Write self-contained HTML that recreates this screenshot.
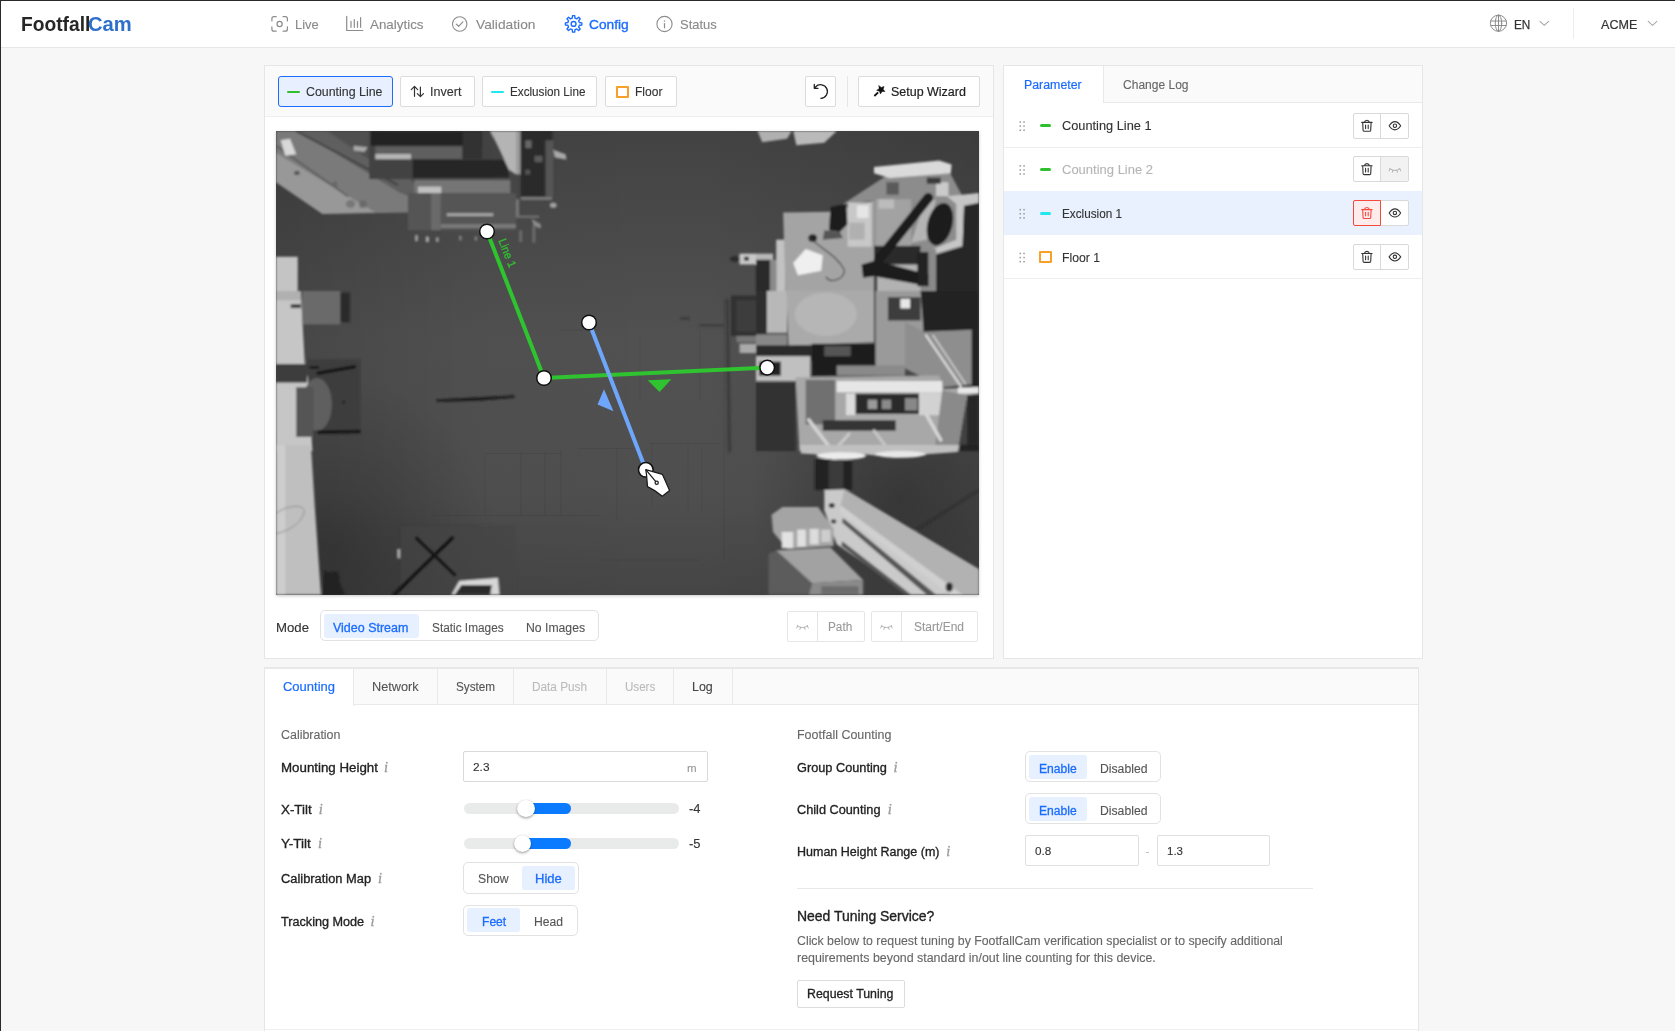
<!DOCTYPE html><html><head><meta charset="utf-8"><title>FootfallCam Config</title><style>
*{box-sizing:border-box}
html,body{margin:0;padding:0}
body{width:1675px;height:1031px;overflow:hidden;background:#f7f7f7;font-family:"Liberation Sans",sans-serif;position:relative}
.b{position:absolute}
.t{position:absolute;white-space:pre}
svg{position:absolute;overflow:visible}
.btn{background:#fff;border:1px solid #dcdcdc;border-radius:2px}
.seg{background:#fff;border:1px solid #e2e2e2;border-radius:5px}
.sel{background:#e6f0fe;border-radius:3px}
</style></head><body><div id="root" style="position:absolute;left:0;top:0;width:1675px;height:1031px;will-change:transform"><div class="b" style="left:0px;top:0px;width:1675px;height:48px;background:#fff;border-bottom:1px solid #e6e6e6"></div>
<span class="t" style="left:20.72px;top:15.00px;font-size:19.5px;line-height:19.5px;color:#262626;font-weight:700;transform:scaleX(0.9851);transform-origin:0 50%;">Footfall</span>
<span class="t" style="left:88.42px;top:15.00px;font-size:19.5px;line-height:19.5px;color:#2f6fcc;font-weight:700;transform:scaleX(1.0349);transform-origin:0 50%;">Cam</span>
<svg style="left:0;top:0" width="1675" height="1031" viewBox="0 0 1675 1031" fill="none" stroke-linecap="round" stroke-linejoin="round" ><path d="M271.9,21.0V18.7Q271.9,16.7 273.9,16.7H276.2M283.09999999999997,16.7H285.4Q287.4,16.7 287.4,18.7V21.0M287.4,26.9V29.2Q287.4,31.2 285.4,31.2H283.09999999999997M276.2,31.2H273.9Q271.9,31.2 271.9,29.2V26.9" stroke="#8c8c8c" stroke-width="1.2"/><circle cx="279.6" cy="24" r="2.6" stroke="#8c8c8c" stroke-width="1.2"/></svg>
<span class="t" style="left:295.19px;top:18.00px;font-size:13.5px;line-height:13.5px;color:#8a8a8a;transform:scaleX(0.9589);transform-origin:0 50%;-webkit-text-stroke:0.12px #8a8a8a;">Live</span>
<svg style="left:0;top:0" width="1675" height="1031" viewBox="0 0 1675 1031" fill="none" stroke-linecap="round" stroke-linejoin="round" ><path d="M346.7,16.3V30.5H362.8 M351,21.3V27.3 M354.3,19.6V27.3 M357.5,21.6V27.3 M360.6,17.6V27.3" stroke="#8c8c8c" stroke-width="1.2"/></svg>
<span class="t" style="left:370.39px;top:18.00px;font-size:13.5px;line-height:13.5px;color:#8a8a8a;transform:scaleX(0.9910);transform-origin:0 50%;-webkit-text-stroke:0.12px #8a8a8a;">Analytics</span>
<svg style="left:0;top:0" width="1675" height="1031" viewBox="0 0 1675 1031" fill="none" stroke-linecap="round" stroke-linejoin="round" ><circle cx="459.7" cy="24" r="7.2" stroke="#8c8c8c" stroke-width="1.1"/><path d="M456.3,24.1L458.6,26.3L462.9,21.9" stroke="#8c8c8c" stroke-width="1.2"/></svg>
<span class="t" style="left:475.59px;top:18.00px;font-size:13.5px;line-height:13.5px;color:#8a8a8a;transform:scaleX(1.0197);transform-origin:0 50%;-webkit-text-stroke:0.12px #8a8a8a;">Validation</span>
<svg style="left:0;top:0" width="1675" height="1031" viewBox="0 0 1675 1031" fill="none" stroke-linecap="round" stroke-linejoin="round" ><path d="M572.22,18.16L572.52,15.67L574.68,15.67L574.98,18.16L576.68,18.87L578.65,17.32L580.18,18.85L578.63,20.82L579.34,22.52L581.83,22.82L581.83,24.98L579.34,25.28L578.63,26.98L580.18,28.95L578.65,30.48L576.68,28.93L574.98,29.64L574.68,32.13L572.52,32.13L572.22,29.64L570.52,28.93L568.55,30.48L567.02,28.95L568.57,26.98L567.86,25.28L565.37,24.98L565.37,22.82L567.86,22.52L568.57,20.82L567.02,18.85L568.55,17.32L570.52,18.87Z" stroke="#1b6cff" stroke-width="1.4"/><circle cx="573.6" cy="23.9" r="2.4" stroke="#1b6cff" stroke-width="1.4"/></svg>
<span class="t" style="left:589.19px;top:18.00px;font-size:13.5px;line-height:13.5px;color:#1b6cff;transform:scaleX(1.0158);transform-origin:0 50%;-webkit-text-stroke:0.35px #1b6cff;">Config</span>
<svg style="left:0;top:0" width="1675" height="1031" viewBox="0 0 1675 1031" fill="none" stroke-linecap="round" stroke-linejoin="round" ><circle cx="664.5" cy="24" r="7.6" stroke="#8c8c8c" stroke-width="1.1"/><path d="M664.5,23.5V27.8" stroke="#8c8c8c" stroke-width="1.2"/><circle cx="664.5" cy="20.9" r="0.75" fill="#8c8c8c"/></svg>
<span class="t" style="left:680.19px;top:18.00px;font-size:13.5px;line-height:13.5px;color:#8a8a8a;transform:scaleX(0.9599);transform-origin:0 50%;-webkit-text-stroke:0.12px #8a8a8a;">Status</span>
<svg style="left:0;top:0" width="1675" height="1031" viewBox="0 0 1675 1031" fill="none" stroke-linecap="round" stroke-linejoin="round" ><g stroke="#8c8c8c" stroke-width="1"><circle cx="1498.5" cy="23.2" r="8.1"/><ellipse cx="1498.5" cy="23.2" rx="3.2" ry="8.1"/><path d="M1498.5,15.1V31.3 M1490.8,21H1506.2 M1490.8,25.5H1506.2"/></g></svg>
<span class="t" style="left:1514.41px;top:18.00px;font-size:13.2px;line-height:13.2px;color:#333;transform:scaleX(0.8905);transform-origin:0 50%;-webkit-text-stroke:0.25px #333;">EN</span>
<svg style="left:0;top:0" width="1675" height="1031" viewBox="0 0 1675 1031" fill="none" stroke-linecap="round" stroke-linejoin="round" ><path d="M1540.0,21.4L1544.3,25.3L1548.6,21.4" stroke="#a8a8a8" stroke-width="1.1"/></svg>
<div class="b" style="left:1573px;top:8px;width:1px;height:31px;background:#ececec"></div>
<span class="t" style="left:1600.91px;top:18.00px;font-size:13.2px;line-height:13.2px;color:#333;transform:scaleX(0.9531);transform-origin:0 50%;-webkit-text-stroke:0.2px #333;">ACME</span>
<svg style="left:0;top:0" width="1675" height="1031" viewBox="0 0 1675 1031" fill="none" stroke-linecap="round" stroke-linejoin="round" ><path d="M1648.2,21.4L1652.5,25.3L1656.8,21.4" stroke="#a8a8a8" stroke-width="1.1"/></svg>
<div class="b" style="left:264px;top:65px;width:730px;height:594px;background:#fff;border:1px solid #e6e6e6"></div>
<div class="b" style="left:265px;top:66px;width:728px;height:51px;background:#fafafa;border-bottom:1px solid #efefef"></div>
<div class="b" style="left:278px;top:76px;width:115px;height:31px;background:#e8effe;border:1.5px solid #1b6cff;border-radius:3px"></div>
<div class="b" style="left:287px;top:90.5px;width:13px;height:2.0px;background:#2fc02f;border-radius:1px"></div>
<span class="t" style="left:305.64px;top:86.00px;font-size:12.5px;line-height:12.5px;color:#333;transform:scaleX(0.9910);transform-origin:0 50%;-webkit-text-stroke:0.12px #333;">Counting Line</span>
<div class="b btn" style="left:400px;top:76px;width:75px;height:31px;"></div>
<svg style="left:0;top:0" width="1675" height="1031" viewBox="0 0 1675 1031" fill="none" stroke-linecap="round" stroke-linejoin="round" ><path d="M414.5,86.5V96.3 M411.3,89.6L414.5,86.4L417.7,89.6 M420.4,87V96.5 M417.3,93.6L420.4,96.7L423.5,93.6" stroke="#333" stroke-width="1.2"/></svg>
<span class="t" style="left:429.64px;top:86.00px;font-size:12.5px;line-height:12.5px;color:#333;transform:scaleX(1.0031);transform-origin:0 50%;-webkit-text-stroke:0.12px #333;">Invert</span>
<div class="b btn" style="left:482px;top:76px;width:115px;height:31px;"></div>
<div class="b" style="left:491px;top:90.5px;width:13px;height:2.0px;background:#22e6f0;border-radius:1px"></div>
<span class="t" style="left:510.04px;top:86.00px;font-size:12.5px;line-height:12.5px;color:#333;transform:scaleX(0.9362);transform-origin:0 50%;-webkit-text-stroke:0.12px #333;">Exclusion Line</span>
<div class="b btn" style="left:605px;top:76px;width:72px;height:31px;"></div>
<div class="b" style="left:616px;top:85.5px;width:13px;height:12.5px;border:2px solid #f9a02b;border-radius:1px"></div>
<span class="t" style="left:634.74px;top:86.00px;font-size:12.5px;line-height:12.5px;color:#333;transform:scaleX(0.9641);transform-origin:0 50%;-webkit-text-stroke:0.12px #333;">Floor</span>
<div class="b btn" style="left:805px;top:76px;width:31px;height:31px;"></div>
<svg style="left:0;top:0" width="1675" height="1031" viewBox="0 0 1675 1031" fill="none" stroke-linecap="round" stroke-linejoin="round" ><path d="M815.55,86.95A6.8,6.8 0 1 1 820.84,98.30 M814.3,84.4V88.3H818" stroke="#222" stroke-width="1.3"/></svg>
<div class="b" style="left:847px;top:76px;width:1px;height:31px;background:#e6e6e6"></div>
<div class="b btn" style="left:858px;top:76px;width:122px;height:31px;"></div>
<svg style="left:0;top:0" width="1675" height="1031" viewBox="0 0 1675 1031" fill="none" stroke-linecap="round" stroke-linejoin="round" ><path d="M878.93,85.72L881.31,87.42L884.06,86.43L883.17,89.22L884.95,91.53L882.03,91.54L880.39,93.96L879.47,91.18L876.67,90.36L879.02,88.64Z" fill="#111" stroke="#111" stroke-width="0.5"/><path d="M874.4,96L878.1,92.4" stroke="#111" stroke-width="1.8" stroke-linecap="butt"/></svg>
<span class="t" style="left:891.14px;top:86.00px;font-size:12.5px;line-height:12.5px;color:#222;transform:scaleX(0.9978);transform-origin:0 50%;-webkit-text-stroke:0.2px #222;">Setup Wizard</span>
<svg style="left:276px;top:131px;overflow:hidden;box-shadow:0 1px 3px rgba(0,0,0,.22)" width="703" height="464" viewBox="276 131 703 464"><defs>
<linearGradient id="fl" x1="0" y1="0" x2="0" y2="1"><stop offset="0" stop-color="#434343"/><stop offset=".45" stop-color="#515151"/><stop offset=".78" stop-color="#4f4f4f"/><stop offset="1" stop-color="#454545"/></linearGradient>
<linearGradient id="fh" x1="0" y1="0" x2="1" y2="0"><stop offset="0" stop-color="#000" stop-opacity=".13"/><stop offset=".28" stop-color="#000" stop-opacity=".02"/><stop offset=".6" stop-color="#000" stop-opacity="0"/><stop offset="1" stop-color="#000" stop-opacity=".1"/></linearGradient>
<radialGradient id="d1" cx="330" cy="545" r="170" gradientUnits="userSpaceOnUse"><stop offset="0" stop-color="#000" stop-opacity=".22"/><stop offset="1" stop-color="#000" stop-opacity="0"/></radialGradient>
<radialGradient id="d2" cx="900" cy="500" r="150" gradientUnits="userSpaceOnUse"><stop offset="0" stop-color="#000" stop-opacity=".25"/><stop offset="1" stop-color="#000" stop-opacity="0"/></radialGradient>
<filter id="bl" x="-5%" y="-5%" width="110%" height="110%"><feGaussianBlur stdDeviation="0.9"/></filter>
</defs><rect x="276" y="131" width="703" height="464" fill="url(#fl)"/><rect x="276" y="131" width="703" height="464" fill="url(#fh)"/><rect x="276" y="131" width="703" height="464" fill="url(#d1)"/><rect x="276" y="131" width="703" height="464" fill="url(#d2)"/><g stroke="#303030" stroke-opacity=".2" stroke-width="1" fill="none"><path d="M485,454V515 M521,452V515 M545,451V515 M561,450V515 M617,448V520 M652,443V508 M688,445V510 M702,448V512 M485,453.5H561 M430,515.5H600 M578,448.5H640 M650,443.5H720 M400,525.5H480 M724,300V560 M560,330H600 M640,335V400 M600,560H700 M700,330V400"/></g><g filter="url(#bl)"><g transform="translate(276,131) scale(0.155239)"><polygon points="0,0 600,0 1000,470 870,525 300,535 0,330" fill="#7a7a7a" /><polygon points="150,0 620,0 1000,470 800,400" fill="#5e5e5e" /><polygon points="330,0 620,0 880,300 760,290" fill="#505050" /><polygon points="0,140 0,330 300,535 640,525" fill="#989898" /><line x1="130" y1="0" x2="780" y2="345" stroke="#454545" stroke-width="14" stroke-linecap="round" /><line x1="0" y1="95" x2="460" y2="420" stroke="#5a5a5a" stroke-width="10" stroke-linecap="round" /><polygon points="30,60 90,50 130,150 60,160" fill="#d8d8d8" /><polygon points="500,95 590,105 570,135 500,125" fill="#a8a8a8" /><ellipse cx="135" cy="270" rx="18" ry="14" fill="#555" /><ellipse cx="380" cy="345" rx="16" ry="20" fill="#666" /><ellipse cx="480" cy="470" rx="30" ry="25" fill="#777" /><ellipse cx="560" cy="470" rx="25" ry="25" fill="#6a6a6a" /><rect x="600" y="0" width="790" height="310" fill="#424242" /><rect x="610" y="0" width="650" height="95" fill="#242424" /><rect x="640" y="100" width="690" height="80" fill="#5e5e5e" /><rect x="640" y="148" width="230" height="34" fill="#b4b4b4" /><rect x="1200" y="0" width="130" height="180" fill="#333" /><rect x="880" y="185" width="620" height="115" fill="#282828" /><rect x="890" y="315" width="620" height="85" fill="#747474" /><rect x="915" y="358" width="150" height="42" fill="#c0c0c0" /><rect x="850" y="400" width="696" height="240" fill="#545454" /><rect x="1000" y="400" width="60" height="240" fill="#6a6a6a" /><rect x="1100" y="530" width="300" height="18" fill="#a8a8a8" /><rect x="1060" y="600" width="486" height="25" fill="#7a7a7a" /><polygon points="1380,0 1546,0 1546,280 1500,250 1430,100" fill="#b4b4b4" /><rect x="895" y="670" width="20" height="40" fill="#999" /><rect x="965" y="680" width="20" height="35" fill="#aaa" /><rect x="1030" y="685" width="18" height="30" fill="#999" /><rect x="1180" y="675" width="15" height="30" fill="#888" /><rect x="1280" y="680" width="15" height="25" fill="#888" /><rect x="0" y="810" width="140" height="221" fill="#c4c4c4" /></g><g transform="translate(516,131) scale(0.155239)"><rect x="0" y="0" width="30" height="280" fill="#9c9c9c" /><rect x="30" y="0" width="205" height="440" fill="#2c2c2c" /><rect x="190" y="60" width="50" height="380" fill="#555" /><rect x="60" y="60" width="40" height="50" fill="#666" /><rect x="120" y="160" width="50" height="40" fill="#5a5a5a" /><rect x="60" y="250" width="30" height="30" fill="#555" /><rect x="30" y="425" width="200" height="20" fill="#777" /><polygon points="240,120 320,150 325,185 250,170" fill="#a8a8a8" /><ellipse cx="240" cy="478" rx="22" ry="18" fill="#a0a0a0" /><rect x="0" y="440" width="20" height="120" fill="#777" /><rect x="0" y="545" width="150" height="15" fill="#707070" /><polygon points="100,565 160,600 160,630 115,610" fill="#8c8c8c" /><rect x="105" y="610" width="20" height="110" fill="#6c6c6c" /><rect x="20" y="640" width="20" height="75" fill="#6c6c6c" /><rect x="1440" y="790" width="106" height="70" fill="#c8c8c8" /><ellipse cx="1410" cy="825" rx="30" ry="18" fill="#2a2a2a" /><rect x="1470" y="810" width="30" height="25" fill="#333" /></g><g transform="translate(756,131) scale(0.155239)"><polygon points="10,0 230,0 200,50 40,72" fill="#b0b0b0" /><polygon points="240,0 520,0 440,75 260,92" fill="#bababa" /><rect x="0" y="790" width="110" height="40" fill="#b8b8b8" /><rect x="0" y="830" width="90" height="201" fill="#2c2c2c" /><rect x="130" y="700" width="60" height="331" fill="#c2c2c2" /><rect x="90" y="830" width="40" height="201" fill="#8a8a8a" /><polygon points="175,525 490,520 760,450 760,1031 190,1031" fill="#a4a4a4" /><polygon points="560,470 830,295 1250,270 1330,420 1436,400 1436,470 1340,480 1330,740 1150,790 760,790 760,450" fill="#8c8c8c" /><polygon points="760,232 1180,190 1260,215 1255,272 860,302 760,272" fill="#dadada" /><rect x="840" y="330" width="80" height="80" fill="#5a5a5a" /><rect x="1160" y="330" width="80" height="90" fill="#cacaca" /><rect x="770" y="440" width="230" height="320" fill="#a2a2a2" /><rect x="790" y="440" width="100" height="60" fill="#bcbcbc" /><polygon points="480,490 580,470 590,600 540,650 470,640" fill="#1e1e1e" /><polygon points="440,640 540,650 560,690 430,700" fill="#555" /><rect x="590" y="460" width="155" height="285" fill="#c8c8c8" /><rect x="650" y="480" width="75" height="80" fill="#e6e6e6" /><rect x="600" y="590" width="100" height="110" fill="#b0b0b0" /><ellipse cx="365" cy="690" rx="28" ry="25" fill="#222" /><polygon points="1230,420 1436,400 1436,470 1340,485 1330,740 1150,795 1140,760 1290,700 1290,470" fill="#c6c6c6" /><polygon points="1080,470 1160,440 1100,700 1000,720" fill="#b4b4b4" /><ellipse cx="1185" cy="600" rx="80" ry="140" fill="#1e1e1e" transform="rotate(15 1185 600)"/><polygon points="1340,482 1436,462 1436,1031 1150,1031 1150,800 1330,745" fill="#262626" /><rect x="760" y="740" width="300" height="130" fill="#2a2a2a" /><rect x="780" y="860" width="300" height="171" fill="#b2b2b2" /><rect x="1060" y="760" width="100" height="271" fill="#8a8a8a" /><line x1="1110" y1="430" x2="790" y2="830" stroke="#1a1a1a" stroke-width="62" stroke-linecap="round" stroke-linecap="butt"/><polygon points="680,860 770,835 1110,925 1110,1000 760,935 690,945" fill="#1a1a1a" /><rect x="1040" y="780" width="70" height="220" fill="#222" /><rect x="1100" y="300" width="90" height="40" fill="#3a3a3a" /><polygon points="240,850 320,760 430,800 420,900 270,930" fill="#efefef" /><path d="M350,690 C420,760 520,800 570,895 C565,960 480,985 450,940" fill="none" stroke="#3a3a3a" stroke-width="7"/></g><g transform="translate(276,291) scale(0.155239)"><rect x="200" y="440" width="345" height="480" fill="#3d3d3d" /><polygon points="0,0 160,0 185,460 205,560 235,1031 0,1031" fill="#c6c6c6" /><rect x="0" y="470" width="200" height="120" fill="#3c3c3c" /><rect x="95" y="85" width="65" height="25" fill="#3a3a3a" /><rect x="0" y="0" width="160" height="60" fill="#b0b0b0" /><rect x="170" y="0" width="245" height="215" fill="#6a6a6a" /><rect x="415" y="10" width="60" height="190" fill="#2a2a2a" /><ellipse cx="265" cy="730" rx="95" ry="170" fill="#5e5e5e" /><rect x="130" y="620" width="110" height="320" fill="#555" /><line x1="270" y1="530" x2="505" y2="488" stroke="#141414" stroke-width="22" stroke-linecap="round" /><line x1="225" y1="493" x2="270" y2="493" stroke="#1c1c1c" stroke-width="20" stroke-linecap="round" /><line x1="275" y1="908" x2="535" y2="905" stroke="#141414" stroke-width="22" stroke-linecap="round" /><ellipse cx="435" cy="715" rx="10" ry="12" fill="#222" /><path d="M1040,706 L1530,680 L1300,700 Z" fill="#1a1a1a" stroke="#1a1a1a" stroke-width="14" stroke-linejoin="round"/></g><g transform="translate(516,291) scale(0.155239)"><line x1="1360" y1="60" x2="1375" y2="1031" stroke="#3c3c3c" stroke-width="22" stroke-linecap="round" stroke-linecap="butt"/><rect x="1385" y="30" width="161" height="260" fill="#303030" /><rect x="1420" y="60" width="126" height="200" fill="#3c3c3c" /><rect x="1420" y="290" width="126" height="40" fill="#777" /><rect x="1440" y="340" width="106" height="60" fill="#aaa" /><rect x="1060" y="170" width="60" height="15" fill="#3a3a3a" /><rect x="1180" y="215" width="160" height="13" fill="#3a3a3a" /></g><g transform="translate(756,291) scale(0.155239)"><rect x="0" y="0" width="70" height="280" fill="#2e2e2e" /><rect x="70" y="0" width="130" height="270" fill="#b8b8b8" /><polygon points="195,0 760,0 760,330 210,352" fill="#aaaaaa" /><ellipse cx="450" cy="150" rx="200" ry="140" fill="#b6b6b6" /><rect x="0" y="280" width="200" height="80" fill="#888" /><rect x="0" y="350" width="360" height="100" fill="#2a2a2a" /><rect x="360" y="340" width="410" height="205" fill="#1e1e1e" /><rect x="440" y="355" width="170" height="65" fill="#555" /><rect x="0" y="420" width="350" height="160" fill="#c0c0c0" /><rect x="20" y="455" width="140" height="90" fill="#222" /><rect x="770" y="0" width="310" height="490" fill="#9a9a9a" /><rect x="850" y="40" width="210" height="150" fill="#3e3e3e" /><rect x="930" y="50" width="62" height="62" fill="#e8e8e8" /><polygon points="1060,0 1436,0 1436,262 1080,262" fill="#242424" /><polygon points="960,200 1080,262 1390,250 1390,600 1200,620 960,500" fill="#8e8e8e" /><line x1="1095" y1="285" x2="1320" y2="615" stroke="#dedede" stroke-width="14" stroke-linecap="round" /><line x1="1140" y1="285" x2="1350" y2="600" stroke="#d0d0d0" stroke-width="10" stroke-linecap="round" /><rect x="1390" y="260" width="46" height="360" fill="#222" /><rect x="520" y="480" width="440" height="65" fill="#8a8a8a" /><rect x="0" y="590" width="255" height="441" fill="#333" /><polygon points="255,555 1180,545 1210,630 1436,620 1436,660 1360,672 1300,1031 280,1031" fill="#a8a8a8" /><rect x="520" y="580" width="680" height="72" fill="#e6e6e6" /><rect x="320" y="572" width="190" height="288" fill="#707070" /><rect x="640" y="662" width="410" height="130" fill="#2c2c2c" /><rect x="720" y="700" width="60" height="60" fill="#999" /><rect x="810" y="700" width="60" height="60" fill="#8a8a8a" /><rect x="960" y="690" width="80" height="80" fill="#888" /><rect x="430" y="832" width="470" height="68" fill="#363636" /><rect x="1050" y="652" width="150" height="148" fill="#d2d2d2" /><rect x="580" y="660" width="60" height="140" fill="#dcdcdc" /><polygon points="1200,640 1360,672 1300,1031 1150,1031" fill="#8a8a8a" /><line x1="1100" y1="800" x2="1190" y2="960" stroke="#d8d8d8" stroke-width="22" stroke-linecap="round" /><line x1="340" y1="830" x2="470" y2="1000" stroke="#d4d4d4" stroke-width="22" stroke-linecap="round" /><line x1="600" y1="920" x2="500" y2="1031" stroke="#ccc" stroke-width="18" stroke-linecap="round" /><line x1="760" y1="900" x2="860" y2="1031" stroke="#c8c8c8" stroke-width="18" stroke-linecap="round" /><rect x="1360" y="672" width="76" height="359" fill="#282828" /><rect x="1300" y="620" width="136" height="40" fill="#e8e8e8" /></g><g transform="translate(276,445) scale(0.155239)"><rect x="800" y="520" width="746" height="445" fill="#444444" opacity="0.6"/><polygon points="0,0 225,0 250,400 290,965 0,965" fill="#bfbfbf" /><rect x="0" y="0" width="60" height="965" fill="#cdcdcd" /><line x1="905" y1="600" x2="1150" y2="835" stroke="#161616" stroke-width="22" stroke-linecap="round" /><line x1="1135" y1="598" x2="760" y2="965" stroke="#161616" stroke-width="24" stroke-linecap="round" /><polygon points="1180,875 1430,855 1440,965 1130,965" fill="#d6d6d6" /><polygon points="1195,902 1390,902 1380,965 1150,965" fill="#2a2a2a" /><polygon points="300,965 310,815 400,820 412,900 445,965" fill="#202020" /><rect x="780" y="670" width="20" height="60" fill="#aaa" /><path d="M0,440 C80,380 200,380 180,440 C150,520 60,560 0,570" fill="none" stroke="#8a8a8a" stroke-width="6"/></g><g transform="translate(756,445) scale(0.155239)"><rect x="380" y="90" width="90" height="200" fill="#222" /><rect x="560" y="100" width="60" height="190" fill="#222" /><rect x="470" y="100" width="90" height="190" fill="#3a3a3a" /><polygon points="280,0 1310,0 1300,45 1100,60 900,82 700,60 500,97 380,60 290,55" fill="#c0c0c0" /><ellipse cx="550" cy="70" rx="160" ry="24" fill="#ececec" /><ellipse cx="930" cy="60" rx="165" ry="22" fill="#e8e8e8" /><rect x="1310" y="0" width="126" height="40" fill="#222" /><polygon points="440,290 570,285 1436,800 1436,965 990,965 520,640 440,420" fill="#cacaca" /><polygon points="570,285 1436,800 1436,965 1330,965 545,390" fill="#b2b2b2" /><polygon points="560,470 1160,965 1100,965 555,500" fill="#555" /><polygon points="555,620 1000,965 960,965 550,650" fill="#555" /><polygon points="545,390 1330,965 1250,965 545,440" fill="#d0d0d0" /><ellipse cx="488" cy="390" rx="18" ry="16" fill="#333" /><ellipse cx="500" cy="492" rx="16" ry="14" fill="#333" /><ellipse cx="1245" cy="915" rx="22" ry="30" fill="#2a2a2a" /><line x1="1436" y1="290" x2="1030" y2="550" stroke="#2a2a2a" stroke-width="8" stroke-linecap="round" /><polygon points="100,450 170,400 400,400 500,540 500,650 200,670 110,560" fill="#a4a4a4" /><rect x="165" y="560" width="75" height="105" fill="#e2e2e2" /><rect x="265" y="545" width="57" height="110" fill="#e0e0e0" /><rect x="345" y="540" width="60" height="100" fill="#dcdcdc" /><rect x="420" y="545" width="60" height="80" fill="#cdcdcd" /><polygon points="130,680 480,660 690,870 360,890" fill="#a2a2a2" /><polygon points="360,890 690,870 690,965 340,965" fill="#8a8a8a" /><polygon points="80,700 130,680 360,890 340,965 80,965" fill="#5c5c5c" /><rect x="420" y="910" width="240" height="50" fill="#6c6c6c" /></g></g><g fill="none" stroke-linecap="butt"><polyline points="487,231.5 544,378 767.2,367.6" stroke="#2fc32f" stroke-width="4" stroke-linejoin="round"/><line x1="589" y1="322.5" x2="645.8" y2="469.8" stroke="#6ea6fb" stroke-width="4"/></g><polygon points="647.7,380.3 671.3,379.2 659.6,391.9" fill="#2fc32f"/><polygon points="604,389.3 597.5,404.4 613.5,411.3" fill="#6ea6fb"/><circle cx="487" cy="231.5" r="7.3" fill="#fff" stroke="#111" stroke-width="1.5"/><circle cx="544" cy="378" r="7.3" fill="#fff" stroke="#111" stroke-width="1.5"/><circle cx="767.2" cy="367.6" r="7.3" fill="#fff" stroke="#111" stroke-width="1.5"/><circle cx="589" cy="322.5" r="7.3" fill="#fff" stroke="#111" stroke-width="1.5"/><circle cx="645.8" cy="469.8" r="7.3" fill="#fff" stroke="#111" stroke-width="1.5"/><text transform="translate(498.2,240.5) rotate(68.5)" font-family="Liberation Sans, sans-serif" font-size="11.5" fill="#2fc32f" stroke="#2fc32f" stroke-width="0.3" textLength="30" lengthAdjust="spacingAndGlyphs">Line 1</text><g stroke="#1c1c1c" stroke-width="1.25" stroke-linejoin="round"><path d="M645.8,469.6 L662.5,474.4 L669.6,490.4 L662.3,496.3 Q655,490 647.5,486.6 L646.5,474.4 Z" fill="#fff"/><path d="M645.8,469.6 L655.6,481.4" fill="none"/><circle cx="656.7" cy="482.7" r="1.6" fill="#fff"/></g></svg>
<span class="t" style="left:276.12px;top:621.00px;font-size:13px;line-height:13px;color:#333;transform:scaleX(1.0146);transform-origin:0 50%;-webkit-text-stroke:0.12px #333;">Mode</span>
<div class="b seg" style="left:320px;top:610px;width:278.5px;height:31px;"></div>
<div class="b sel" style="left:323.5px;top:614px;width:95.0px;height:24px;"></div>
<span class="t" style="left:332.94px;top:622.00px;font-size:12.5px;line-height:12.5px;color:#1b6cff;transform:scaleX(0.9980);transform-origin:0 50%;-webkit-text-stroke:0.3px #1b6cff;">Video Stream</span>
<span class="t" style="left:431.84px;top:622.00px;font-size:12.5px;line-height:12.5px;color:#555;transform:scaleX(0.9462);transform-origin:0 50%;-webkit-text-stroke:0.12px #555;">Static Images</span>
<span class="t" style="left:525.84px;top:622.00px;font-size:12.5px;line-height:12.5px;color:#555;transform:scaleX(0.9770);transform-origin:0 50%;-webkit-text-stroke:0.12px #555;">No Images</span>
<div class="b" style="left:787px;top:611px;width:78px;height:31px;background:#fff;border:1px solid #e6e6e6;border-radius:2px"></div>
<div class="b" style="left:817px;top:612px;width:1px;height:29px;background:#e4e4e4"></div>
<svg style="left:0;top:0" width="1675" height="1031" viewBox="0 0 1675 1031" fill="none" stroke-linecap="round" stroke-linejoin="round" ><path d="M797.3,625.6Q802.5,629.8 807.7,625.6 M797.6,626.0L796.7,628.0 M800.5,627.4L799.9,629.4 M804.5,627.4L805.1,629.4 M807.4,626.0L808.3,628.0" stroke="#aaa" stroke-width="0.9"/></svg>
<span class="t" style="left:828.44px;top:621.00px;font-size:12.5px;line-height:12.5px;color:#999;transform:scaleX(0.9434);transform-origin:0 50%;-webkit-text-stroke:0.12px #999;">Path</span>
<div class="b" style="left:871px;top:611px;width:107px;height:31px;background:#fff;border:1px solid #e6e6e6;border-radius:2px"></div>
<div class="b" style="left:901px;top:612px;width:1px;height:29px;background:#e4e4e4"></div>
<svg style="left:0;top:0" width="1675" height="1031" viewBox="0 0 1675 1031" fill="none" stroke-linecap="round" stroke-linejoin="round" ><path d="M881.3,625.6Q886.5,629.8 891.7,625.6 M881.6,626.0L880.7,628.0 M884.5,627.4L883.9,629.4 M888.5,627.4L889.1,629.4 M891.4,626.0L892.3,628.0" stroke="#aaa" stroke-width="0.9"/></svg>
<span class="t" style="left:914.04px;top:621.00px;font-size:12.5px;line-height:12.5px;color:#999;transform:scaleX(0.9604);transform-origin:0 50%;-webkit-text-stroke:0.12px #999;">Start/End</span>
<div class="b" style="left:1003px;top:65px;width:420px;height:594px;background:#fff;border:1px solid #e6e6e6"></div>
<div class="b" style="left:1004px;top:66px;width:418px;height:37px;background:#fafafa;border-bottom:1px solid #e9e9e9"></div>
<div class="b" style="left:1004px;top:66px;width:100px;height:37px;background:#fff;border-right:1px solid #e9e9e9"></div>
<span class="t" style="left:1023.84px;top:79.00px;font-size:12.5px;line-height:12.5px;color:#1b6cff;transform:scaleX(0.9881);transform-origin:0 50%;-webkit-text-stroke:0.2px #1b6cff;">Parameter</span>
<span class="t" style="left:1123.44px;top:79.00px;font-size:12.5px;line-height:12.5px;color:#666;transform:scaleX(0.9624);transform-origin:0 50%;-webkit-text-stroke:0.12px #666;">Change Log</span>
<div class="b" style="left:1004px;top:146.7px;width:418px;height:1.0px;background:#eeeeee"></div>
<svg style="left:0;top:0" width="1675" height="1031" viewBox="0 0 1675 1031" fill="none" stroke-linecap="round" stroke-linejoin="round" ><rect x="1019.5" y="121.3" width="1.5" height="1.5" fill="#9a9a9a"/><rect x="1019.5" y="125.4" width="1.5" height="1.5" fill="#9a9a9a"/><rect x="1019.5" y="129.5" width="1.5" height="1.5" fill="#9a9a9a"/><rect x="1023.3" y="121.3" width="1.5" height="1.5" fill="#9a9a9a"/><rect x="1023.3" y="125.4" width="1.5" height="1.5" fill="#9a9a9a"/><rect x="1023.3" y="129.5" width="1.5" height="1.5" fill="#9a9a9a"/></svg>
<div class="b" style="left:1040.2px;top:124.2px;width:11.0px;height:3.200000000000003px;background:#2fc02f;border-radius:1.5px"></div>
<span class="t" style="left:1061.94px;top:120.00px;font-size:12.5px;line-height:12.5px;color:#333;transform:scaleX(1.0227);transform-origin:0 50%;-webkit-text-stroke:0.12px #333;">Counting Line 1</span>
<div class="b" style="left:1353px;top:113.1px;width:56px;height:26.0px;background:#fff;border:1px solid #d9d9d9;border-radius:2px"></div>
<div class="b" style="left:1380px;top:114.1px;width:1px;height:24.0px;background:#d9d9d9"></div>
<svg style="left:0;top:0" width="1675" height="1031" viewBox="0 0 1675 1031" fill="none" stroke-linecap="round" stroke-linejoin="round" ><path d="M1361.6999999999998,122.39999999999999H1372.1 M1364.3999999999999,122.39999999999999Q1364.8,120.3 1366.8999999999999,120.3Q1368.9999999999998,120.3 1369.3999999999999,122.39999999999999 M1362.6999999999998,122.39999999999999L1363.1,130.4Q1363.1999999999998,131.3 1364.1,131.3H1369.6999999999998Q1370.6,131.3 1370.6999999999998,130.4L1371.1,122.39999999999999 M1365.6,125.0V128.6 M1368.1999999999998,125.0V128.6" stroke="#333" stroke-width="1.1"/></svg>
<svg style="left:0;top:0" width="1675" height="1031" viewBox="0 0 1675 1031" fill="none" stroke-linecap="round" stroke-linejoin="round" ><path d="M1389.1000000000001,125.75Q1391.9,121.65 1394.9,121.65Q1397.9,121.65 1400.7,125.75Q1397.9,129.85 1394.9,129.85Q1391.9,129.85 1389.1000000000001,125.75Z" stroke="#333" stroke-width="1.1"/><circle cx="1394.9" cy="125.75" r="1.7" stroke="#333" stroke-width="1.1"/></svg>
<div class="b" style="left:1004px;top:190.5px;width:418px;height:1.0px;background:#eeeeee"></div>
<svg style="left:0;top:0" width="1675" height="1031" viewBox="0 0 1675 1031" fill="none" stroke-linecap="round" stroke-linejoin="round" ><rect x="1019.5" y="165.1" width="1.5" height="1.5" fill="#9a9a9a"/><rect x="1019.5" y="169.2" width="1.5" height="1.5" fill="#9a9a9a"/><rect x="1019.5" y="173.3" width="1.5" height="1.5" fill="#9a9a9a"/><rect x="1023.3" y="165.1" width="1.5" height="1.5" fill="#9a9a9a"/><rect x="1023.3" y="169.2" width="1.5" height="1.5" fill="#9a9a9a"/><rect x="1023.3" y="173.3" width="1.5" height="1.5" fill="#9a9a9a"/></svg>
<div class="b" style="left:1040.2px;top:168.0px;width:11.0px;height:3.1999999999999886px;background:#2fc02f;border-radius:1.5px"></div>
<span class="t" style="left:1061.94px;top:164.00px;font-size:12.5px;line-height:12.5px;color:#b5b5b5;transform:scaleX(1.0398);transform-origin:0 50%;-webkit-text-stroke:0.12px #b5b5b5;">Counting Line 2</span>
<div class="b" style="left:1353px;top:156.4px;width:56px;height:26.0px;background:#fff;border:1px solid #d9d9d9;border-radius:2px"></div>
<div class="b" style="left:1380px;top:157.4px;width:1px;height:24.0px;background:#d9d9d9"></div>
<svg style="left:0;top:0" width="1675" height="1031" viewBox="0 0 1675 1031" fill="none" stroke-linecap="round" stroke-linejoin="round" ><path d="M1361.6999999999998,165.7H1372.1 M1364.3999999999999,165.7Q1364.8,163.6 1366.8999999999999,163.6Q1368.9999999999998,163.6 1369.3999999999999,165.7 M1362.6999999999998,165.7L1363.1,173.7Q1363.1999999999998,174.6 1364.1,174.6H1369.6999999999998Q1370.6,174.6 1370.6999999999998,173.7L1371.1,165.7 M1365.6,168.29999999999998V171.9 M1368.1999999999998,168.29999999999998V171.9" stroke="#333" stroke-width="1.1"/></svg>
<div class="b" style="left:1381px;top:157.4px;width:27px;height:24.0px;background:#f2f2f2"></div>
<svg style="left:0;top:0" width="1675" height="1031" viewBox="0 0 1675 1031" fill="none" stroke-linecap="round" stroke-linejoin="round" ><path d="M1389.7,168.5Q1394.9,172.70000000000002 1400.1000000000001,168.5 M1390.0,168.9L1389.1000000000001,170.9 M1392.9,170.3L1392.3000000000002,172.3 M1396.9,170.3L1397.5,172.3 M1399.8000000000002,168.9L1400.7,170.9" stroke="#aaa" stroke-width="0.9"/></svg>
<div class="b" style="left:1004px;top:191.0px;width:418px;height:43.80000000000001px;background:#e8f1fd"></div>
<svg style="left:0;top:0" width="1675" height="1031" viewBox="0 0 1675 1031" fill="none" stroke-linecap="round" stroke-linejoin="round" ><rect x="1019.5" y="208.9" width="1.5" height="1.5" fill="#9a9a9a"/><rect x="1019.5" y="213.0" width="1.5" height="1.5" fill="#9a9a9a"/><rect x="1019.5" y="217.1" width="1.5" height="1.5" fill="#9a9a9a"/><rect x="1023.3" y="208.9" width="1.5" height="1.5" fill="#9a9a9a"/><rect x="1023.3" y="213.0" width="1.5" height="1.5" fill="#9a9a9a"/><rect x="1023.3" y="217.1" width="1.5" height="1.5" fill="#9a9a9a"/></svg>
<div class="b" style="left:1040.2px;top:211.8px;width:11.0px;height:3.1999999999999886px;background:#22e6f0;border-radius:1.5px"></div>
<span class="t" style="left:1061.94px;top:208.00px;font-size:12.5px;line-height:12.5px;color:#333;transform:scaleX(0.9394);transform-origin:0 50%;-webkit-text-stroke:0.12px #333;">Exclusion 1</span>
<div class="b" style="left:1353px;top:200.3px;width:56px;height:26.0px;background:#fff;border:1px solid #d9d9d9;border-radius:2px"></div>
<div class="b" style="left:1380px;top:201.3px;width:1px;height:24.0px;background:#d9d9d9"></div>
<div class="b" style="left:1353px;top:200.3px;width:28px;height:26.0px;background:#fdeceb;border:1px solid #f5483f;border-radius:2px 0 0 2px"></div>
<svg style="left:0;top:0" width="1675" height="1031" viewBox="0 0 1675 1031" fill="none" stroke-linecap="round" stroke-linejoin="round" ><path d="M1361.6999999999998,209.6H1372.1 M1364.3999999999999,209.6Q1364.8,207.5 1366.8999999999999,207.5Q1368.9999999999998,207.5 1369.3999999999999,209.6 M1362.6999999999998,209.6L1363.1,217.6Q1363.1999999999998,218.5 1364.1,218.5H1369.6999999999998Q1370.6,218.5 1370.6999999999998,217.6L1371.1,209.6 M1365.6,212.2V215.8 M1368.1999999999998,212.2V215.8" stroke="#f5483f" stroke-width="1.1"/></svg>
<svg style="left:0;top:0" width="1675" height="1031" viewBox="0 0 1675 1031" fill="none" stroke-linecap="round" stroke-linejoin="round" ><path d="M1389.1000000000001,212.95000000000002Q1391.9,208.85000000000002 1394.9,208.85000000000002Q1397.9,208.85000000000002 1400.7,212.95000000000002Q1397.9,217.05 1394.9,217.05Q1391.9,217.05 1389.1000000000001,212.95000000000002Z" stroke="#333" stroke-width="1.1"/><circle cx="1394.9" cy="212.95000000000002" r="1.7" stroke="#333" stroke-width="1.1"/></svg>
<div class="b" style="left:1004px;top:278.09999999999997px;width:418px;height:1.0px;background:#eeeeee"></div>
<svg style="left:0;top:0" width="1675" height="1031" viewBox="0 0 1675 1031" fill="none" stroke-linecap="round" stroke-linejoin="round" ><rect x="1019.5" y="252.7" width="1.5" height="1.5" fill="#9a9a9a"/><rect x="1019.5" y="256.8" width="1.5" height="1.5" fill="#9a9a9a"/><rect x="1019.5" y="260.9" width="1.5" height="1.5" fill="#9a9a9a"/><rect x="1023.3" y="252.7" width="1.5" height="1.5" fill="#9a9a9a"/><rect x="1023.3" y="256.8" width="1.5" height="1.5" fill="#9a9a9a"/><rect x="1023.3" y="260.9" width="1.5" height="1.5" fill="#9a9a9a"/></svg>
<div class="b" style="left:1039.2px;top:250.49999999999997px;width:12.599999999999909px;height:12.500000000000028px;border:2px solid #f9a02b;border-radius:1px;background:#fff"></div>
<span class="t" style="left:1061.94px;top:252.00px;font-size:12.5px;line-height:12.5px;color:#333;transform:scaleX(0.9783);transform-origin:0 50%;-webkit-text-stroke:0.12px #333;">Floor 1</span>
<div class="b" style="left:1353px;top:244.2px;width:56px;height:26.0px;background:#fff;border:1px solid #d9d9d9;border-radius:2px"></div>
<div class="b" style="left:1380px;top:245.2px;width:1px;height:24.0px;background:#d9d9d9"></div>
<svg style="left:0;top:0" width="1675" height="1031" viewBox="0 0 1675 1031" fill="none" stroke-linecap="round" stroke-linejoin="round" ><path d="M1361.6999999999998,253.49999999999997H1372.1 M1364.3999999999999,253.49999999999997Q1364.8,251.39999999999998 1366.8999999999999,251.39999999999998Q1368.9999999999998,251.39999999999998 1369.3999999999999,253.49999999999997 M1362.6999999999998,253.49999999999997L1363.1,261.5Q1363.1999999999998,262.4 1364.1,262.4H1369.6999999999998Q1370.6,262.4 1370.6999999999998,261.5L1371.1,253.49999999999997 M1365.6,256.09999999999997V259.7 M1368.1999999999998,256.09999999999997V259.7" stroke="#333" stroke-width="1.1"/></svg>
<svg style="left:0;top:0" width="1675" height="1031" viewBox="0 0 1675 1031" fill="none" stroke-linecap="round" stroke-linejoin="round" ><path d="M1389.1000000000001,256.84999999999997Q1391.9,252.74999999999997 1394.9,252.74999999999997Q1397.9,252.74999999999997 1400.7,256.84999999999997Q1397.9,260.95 1394.9,260.95Q1391.9,260.95 1389.1000000000001,256.84999999999997Z" stroke="#333" stroke-width="1.1"/><circle cx="1394.9" cy="256.84999999999997" r="1.7" stroke="#333" stroke-width="1.1"/></svg>
<div class="b" style="left:264px;top:667px;width:1155px;height:373px;background:#fff;border:1px solid #e6e6e6;border-top:2px solid #e8e8e8"></div>
<div class="b" style="left:265px;top:669px;width:1153px;height:36px;background:#fafafa;border-bottom:1px solid #e9e9e9"></div>
<div class="b" style="left:265px;top:669px;width:89px;height:37px;background:#fff;border-right:1px solid #e9e9e9"></div>
<div class="b" style="left:437px;top:669px;width:1px;height:36px;background:#e9e9e9"></div>
<div class="b" style="left:513px;top:669px;width:1px;height:36px;background:#e9e9e9"></div>
<div class="b" style="left:606px;top:669px;width:1px;height:36px;background:#e9e9e9"></div>
<div class="b" style="left:673px;top:669px;width:1px;height:36px;background:#e9e9e9"></div>
<div class="b" style="left:732px;top:669px;width:1px;height:36px;background:#e9e9e9"></div>
<span class="t" style="left:282.84px;top:681.00px;font-size:12.5px;line-height:12.5px;color:#1b6cff;transform:scaleX(1.0383);transform-origin:0 50%;-webkit-text-stroke:0.2px #1b6cff;">Counting</span>
<span class="t" style="left:372.24px;top:681.00px;font-size:12.5px;line-height:12.5px;color:#555;transform:scaleX(1.0157);transform-origin:0 50%;-webkit-text-stroke:0.12px #555;">Network</span>
<span class="t" style="left:455.84px;top:681.00px;font-size:12.5px;line-height:12.5px;color:#555;transform:scaleX(0.9394);transform-origin:0 50%;-webkit-text-stroke:0.12px #555;">System</span>
<span class="t" style="left:532.14px;top:681.00px;font-size:12.5px;line-height:12.5px;color:#bbb;transform:scaleX(0.9433);transform-origin:0 50%;-webkit-text-stroke:0.12px #bbb;">Data Push</span>
<span class="t" style="left:624.64px;top:681.00px;font-size:12.5px;line-height:12.5px;color:#bbb;transform:scaleX(0.9267);transform-origin:0 50%;-webkit-text-stroke:0.12px #bbb;">Users</span>
<span class="t" style="left:692.44px;top:681.00px;font-size:12.5px;line-height:12.5px;color:#444;transform:scaleX(0.9954);transform-origin:0 50%;-webkit-text-stroke:0.12px #444;">Log</span>
<span class="t" style="left:280.94px;top:729.00px;font-size:12.5px;line-height:12.5px;color:#666;transform:scaleX(0.9949);transform-origin:0 50%;-webkit-text-stroke:0.12px #666;">Calibration</span>
<span class="t" style="left:280.94px;top:762.00px;font-size:12.5px;line-height:12.5px;color:#222;transform:scaleX(1.0652);transform-origin:0 50%;-webkit-text-stroke:0.32px #222;">Mounting Height</span>
<span class="t" style="left:384.05px;top:760.00px;font-size:14.5px;line-height:14.5px;color:#9c9c9c;font-style:italic;-webkit-text-stroke:0.35px #9c9c9c;font-family:'Liberation Serif', serif;">i</span>
<div class="b" style="left:463px;top:751px;width:245px;height:31px;background:#fff;border:1px solid #d9d9d9;border-radius:2px"></div>
<span class="t" style="left:473.28px;top:762.00px;font-size:11.5px;line-height:11.5px;color:#333;transform:scaleX(1.0298);transform-origin:0 50%;-webkit-text-stroke:0.12px #333;">2.3</span>
<span class="t" style="left:686.98px;top:763.00px;font-size:11.5px;line-height:11.5px;color:#999;-webkit-text-stroke:0.12px #999;">m</span>
<span class="t" style="left:280.94px;top:804.00px;font-size:12.5px;line-height:12.5px;color:#222;transform:scaleX(1.0683);transform-origin:0 50%;-webkit-text-stroke:0.32px #222;">X-Tilt</span>
<span class="t" style="left:318.75px;top:802.00px;font-size:14.5px;line-height:14.5px;color:#9c9c9c;font-style:italic;-webkit-text-stroke:0.35px #9c9c9c;font-family:'Liberation Serif', serif;">i</span>
<div class="b" style="left:463.5px;top:803.3px;width:215.0px;height:10.400000000000091px;background:#e9eaea;border-radius:6px"></div><div class="b" style="left:526.1px;top:803.3px;width:45.10000000000002px;height:10.400000000000091px;background:#0a7aff;border-radius:0 6px 6px 0"></div><div class="b" style="left:517.3000000000001px;top:799.7px;width:17.59999999999991px;height:17.59999999999991px;background:#fff;border-radius:50%;box-shadow:0 1.5px 2.5px rgba(0,0,0,.3),0 0 1px rgba(0,0,0,.25)"></div><span class="t" style="left:689.44px;top:803.00px;font-size:12.5px;line-height:12.5px;color:#333;transform:scaleX(1.0303);transform-origin:0 50%;-webkit-text-stroke:0.12px #333;">-4</span>
<span class="t" style="left:280.94px;top:838.00px;font-size:12.5px;line-height:12.5px;color:#222;transform:scaleX(1.0834);transform-origin:0 50%;-webkit-text-stroke:0.32px #222;">Y-Tilt</span>
<span class="t" style="left:318.05px;top:836.00px;font-size:14.5px;line-height:14.5px;color:#9c9c9c;font-style:italic;-webkit-text-stroke:0.35px #9c9c9c;font-family:'Liberation Serif', serif;">i</span>
<div class="b" style="left:463.5px;top:838.1999999999999px;width:215.0px;height:10.400000000000091px;background:#e9eaea;border-radius:6px"></div><div class="b" style="left:522.5px;top:838.1999999999999px;width:48.700000000000045px;height:10.400000000000091px;background:#0a7aff;border-radius:0 6px 6px 0"></div><div class="b" style="left:513.7px;top:834.6px;width:17.59999999999991px;height:17.59999999999991px;background:#fff;border-radius:50%;box-shadow:0 1.5px 2.5px rgba(0,0,0,.3),0 0 1px rgba(0,0,0,.25)"></div><span class="t" style="left:689.44px;top:838.00px;font-size:12.5px;line-height:12.5px;color:#333;transform:scaleX(1.0303);transform-origin:0 50%;-webkit-text-stroke:0.12px #333;">-5</span>
<span class="t" style="left:280.94px;top:873.00px;font-size:12.5px;line-height:12.5px;color:#222;transform:scaleX(1.0287);transform-origin:0 50%;-webkit-text-stroke:0.32px #222;">Calibration Map</span>
<span class="t" style="left:378.05px;top:871.00px;font-size:14.5px;line-height:14.5px;color:#9c9c9c;font-style:italic;-webkit-text-stroke:0.35px #9c9c9c;font-family:'Liberation Serif', serif;">i</span>
<div class="b seg" style="left:463px;top:862px;width:116px;height:31.5px;"></div>
<div class="b sel" style="left:522px;top:866px;width:53px;height:24px;"></div>
<span class="t" style="left:478.04px;top:873.00px;font-size:12.5px;line-height:12.5px;color:#555;transform:scaleX(0.9802);transform-origin:0 50%;-webkit-text-stroke:0.12px #555;">Show</span>
<span class="t" style="left:535.14px;top:873.00px;font-size:12.5px;line-height:12.5px;color:#1b6cff;transform:scaleX(1.0406);transform-origin:0 50%;-webkit-text-stroke:0.3px #1b6cff;">Hide</span>
<span class="t" style="left:280.74px;top:916.00px;font-size:12.5px;line-height:12.5px;color:#222;transform:scaleX(1.0115);transform-origin:0 50%;-webkit-text-stroke:0.32px #222;">Tracking Mode</span>
<span class="t" style="left:370.55px;top:914.00px;font-size:14.5px;line-height:14.5px;color:#9c9c9c;font-style:italic;-webkit-text-stroke:0.35px #9c9c9c;font-family:'Liberation Serif', serif;">i</span>
<div class="b seg" style="left:463px;top:905px;width:115px;height:31px;"></div>
<div class="b sel" style="left:467px;top:908px;width:53px;height:24px;"></div>
<span class="t" style="left:481.54px;top:916.00px;font-size:12.5px;line-height:12.5px;color:#1b6cff;transform:scaleX(0.9659);transform-origin:0 50%;-webkit-text-stroke:0.3px #1b6cff;">Feet</span>
<span class="t" style="left:533.84px;top:916.00px;font-size:12.5px;line-height:12.5px;color:#555;transform:scaleX(0.9723);transform-origin:0 50%;-webkit-text-stroke:0.12px #555;">Head</span>
<span class="t" style="left:796.84px;top:729.00px;font-size:12.5px;line-height:12.5px;color:#666;transform:scaleX(0.9984);transform-origin:0 50%;-webkit-text-stroke:0.12px #666;">Footfall Counting</span>
<span class="t" style="left:796.84px;top:762.00px;font-size:12.5px;line-height:12.5px;color:#222;transform:scaleX(1.0192);transform-origin:0 50%;-webkit-text-stroke:0.32px #222;">Group Counting</span>
<span class="t" style="left:893.45px;top:760.00px;font-size:14.5px;line-height:14.5px;color:#9c9c9c;font-style:italic;-webkit-text-stroke:0.35px #9c9c9c;font-family:'Liberation Serif', serif;">i</span>
<span class="t" style="left:796.84px;top:804.00px;font-size:12.5px;line-height:12.5px;color:#222;transform:scaleX(1.0178);transform-origin:0 50%;-webkit-text-stroke:0.32px #222;">Child Counting</span>
<span class="t" style="left:887.75px;top:802.00px;font-size:14.5px;line-height:14.5px;color:#9c9c9c;font-style:italic;-webkit-text-stroke:0.35px #9c9c9c;font-family:'Liberation Serif', serif;">i</span>
<span class="t" style="left:796.84px;top:846.00px;font-size:12.5px;line-height:12.5px;color:#222;transform:scaleX(1.0003);transform-origin:0 50%;-webkit-text-stroke:0.32px #222;">Human Height Range (m)</span>
<span class="t" style="left:946.25px;top:844.00px;font-size:14.5px;line-height:14.5px;color:#9c9c9c;font-style:italic;-webkit-text-stroke:0.35px #9c9c9c;font-family:'Liberation Serif', serif;">i</span>
<div class="b seg" style="left:1025px;top:751px;width:136px;height:31px;"></div>
<div class="b sel" style="left:1029px;top:755px;width:58px;height:24px;"></div>
<span class="t" style="left:1039.04px;top:763.00px;font-size:12.5px;line-height:12.5px;color:#1b6cff;transform:scaleX(0.9673);transform-origin:0 50%;-webkit-text-stroke:0.3px #1b6cff;">Enable</span>
<span class="t" style="left:1099.54px;top:763.00px;font-size:12.5px;line-height:12.5px;color:#555;transform:scaleX(0.9758);transform-origin:0 50%;-webkit-text-stroke:0.12px #555;">Disabled</span>
<div class="b seg" style="left:1025px;top:793px;width:136px;height:31px;"></div>
<div class="b sel" style="left:1029px;top:797px;width:58px;height:24px;"></div>
<span class="t" style="left:1039.04px;top:805.00px;font-size:12.5px;line-height:12.5px;color:#1b6cff;transform:scaleX(0.9673);transform-origin:0 50%;-webkit-text-stroke:0.3px #1b6cff;">Enable</span>
<span class="t" style="left:1099.54px;top:805.00px;font-size:12.5px;line-height:12.5px;color:#555;transform:scaleX(0.9758);transform-origin:0 50%;-webkit-text-stroke:0.12px #555;">Disabled</span>
<div class="b" style="left:1025px;top:835px;width:113.5px;height:31px;background:#fff;border:1px solid #e0e0e0;border-radius:2px"></div>
<span class="t" style="left:1035.18px;top:846.00px;font-size:11.5px;line-height:11.5px;color:#333;transform:scaleX(1.0173);transform-origin:0 50%;-webkit-text-stroke:0.12px #333;">0.8</span>
<span class="t" style="left:1145.48px;top:846.00px;font-size:11.5px;line-height:11.5px;color:#bbb;-webkit-text-stroke:0.12px #bbb;">-</span>
<div class="b" style="left:1157px;top:835px;width:113px;height:31px;background:#fff;border:1px solid #e0e0e0;border-radius:2px"></div>
<span class="t" style="left:1166.98px;top:846.00px;font-size:11.5px;line-height:11.5px;color:#333;transform:scaleX(0.9986);transform-origin:0 50%;-webkit-text-stroke:0.12px #333;">1.3</span>
<div class="b" style="left:797px;top:888px;width:516px;height:1px;background:#e8e8e8"></div>
<span class="t" style="left:796.75px;top:909.00px;font-size:14.5px;line-height:14.5px;color:#222;transform:scaleX(0.9626);transform-origin:0 50%;-webkit-text-stroke:0.35px #222;">Need Tuning Service?</span>
<div class="b" style="left:0px;top:0px;width:1281.9px;height:1031px;overflow:hidden"><span class="t" style="left:796.84px;top:935.00px;font-size:12.5px;line-height:12.5px;color:#666;transform:scaleX(0.9849);transform-origin:0 50%;-webkit-text-stroke:0.12px #666;">Click below to request tuning by FootfallCam verification specialist or to specify additional</span></div>
<span class="t" style="left:796.84px;top:952.00px;font-size:12.5px;line-height:12.5px;color:#666;transform:scaleX(0.9929);transform-origin:0 50%;-webkit-text-stroke:0.12px #666;">requirements beyond standard in/out line counting for this device.</span>
<div class="b btn" style="left:797px;top:980px;width:107.5px;height:28px;"></div>
<span class="t" style="left:807.14px;top:988.00px;font-size:12.5px;line-height:12.5px;color:#222;transform:scaleX(0.9874);transform-origin:0 50%;-webkit-text-stroke:0.3px #222;">Request Tuning</span>
<div class="b" style="left:265px;top:1029px;width:1153px;height:1px;background:#f0f0f0"></div>
<div class="b" style="left:0px;top:0px;width:1675px;height:1px;background:#2a2a2a"></div>
<div class="b" style="left:0px;top:0px;width:1px;height:1031px;background:#2a2a2a"></div></div></body></html>
